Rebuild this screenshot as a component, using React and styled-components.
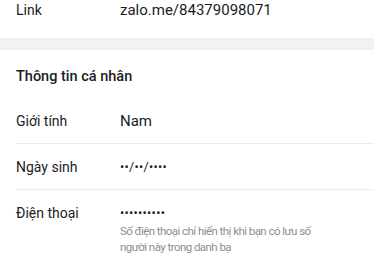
import React from 'react';
import styled, { createGlobalStyle } from 'styled-components';

const Global = createGlobalStyle`
  html, body {
    margin: 0;
    padding: 0;
    background: #ffffff;
    font-family: Roboto, "Noto Sans", "Liberation Sans", sans-serif;
    color: #1b1c1f;
    -webkit-font-smoothing: antialiased;
  }
`;

const Page = styled.div`
  width: 374px;
  height: 257px;
  overflow: hidden;
  background: #ffffff;
`;

const TopRow = styled.div`
  display: flex;
  align-items: flex-start;
  padding: 0 16px 18px;
  line-height: 16px;
`;

const Band = styled.div`
  height: 12px;
  background: #f1f2f4;
`;

const Title = styled.div`
  padding: 17px 16px 11px;
  font-size: 14.5px;
  line-height: 20px;
  font-weight: 500;
  color: #1b1c1f;
`;

const Row = styled.div`
  display: flex;
  align-items: flex-start;
  margin-left: 16px;
  padding: ${(p) => (p.$tall ? '13px 0 0' : '13px 0 12px')};
  border-bottom: ${(p) => (p.$last ? 'none' : '1px solid #ececee')};
`;

const Label = styled.div`
  width: 104px;
  flex-shrink: 0;
  font-size: 14px;
  line-height: 20px;
  color: #1b1c1f;
`;

const Value = styled.div`
  flex: 1;
  font-size: 15px;
  line-height: 20px;
  color: #1b1c1f;
`;

const Masked = styled.div`
  font-size: 12.5px;
  line-height: 20px;
  letter-spacing: 0.3px;
  color: #1b1c1f;
`;

const Hint = styled.div`
  max-width: 218px;
  font-size: 11.5px;
  line-height: 16px;
  letter-spacing: -0.55px;
  color: #8b8e94;
`;

export default function App() {
  return (
    <Page>
      <Global />
      <TopRow>
        <Label>Link</Label>
        <Value>zalo.me/84379098071</Value>
      </TopRow>
      <Band />
      <Title>Thông tin cá nhân</Title>
      <Row>
        <Label>Giới tính</Label>
        <Value>Nam</Value>
      </Row>
      <Row>
        <Label>Ngày sinh</Label>
        <Masked>••/••/••••</Masked>
      </Row>
      <Row $tall $last>
        <Label>Điện thoại</Label>
        <Value>
          <Masked>••••••••••</Masked>
          <Hint>Số điện thoại chỉ hiển thị khi bạn có lưu số người này trong danh bạ</Hint>
        </Value>
      </Row>
    </Page>
  );
}
